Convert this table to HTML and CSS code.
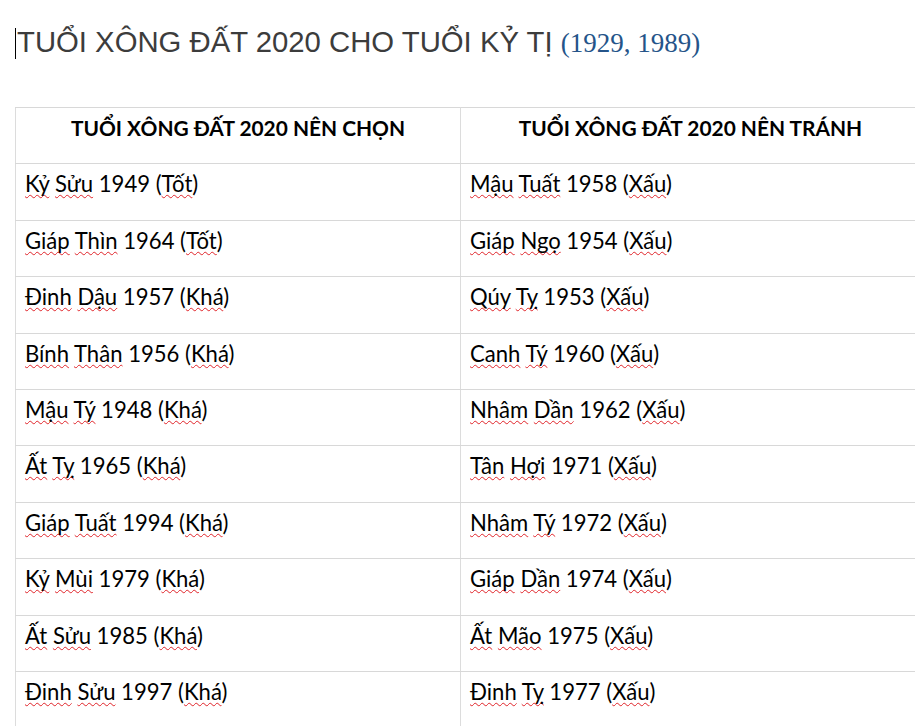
FILE: index.html
```html
<!DOCTYPE html>
<html lang="vi">
<head>
<meta charset="utf-8">
<title>Tuổi xông đất 2020 cho tuổi Kỷ Tị</title>
<link rel="stylesheet" href="styles.css">
</head>
<body>
<div class="page">
  <h1 class="title"><span class="caret"></span>TUỔI XÔNG ĐẤT 2020 CHO TUỔI KỶ TỊ <span class="years">(1929, 1989)</span></h1>
  <table class="grid">
    <colgroup><col class="c1"><col class="c2"></colgroup>
    <thead>
      <tr><th>TUỔI XÔNG ĐẤT 2020 NÊN CHỌN</th><th>TUỔI XÔNG ĐẤT 2020 NÊN TRÁNH</th></tr>
    </thead>
    <tbody>
      <tr><td><span class="sp">Kỷ</span> <span class="sp">Sửu</span> 1949 (<span class="sp">Tốt</span>)</td><td><span class="sp">Mậu</span> <span class="sp">Tuất</span> 1958 (<span class="sp">Xấu</span>)</td></tr>
      <tr><td><span class="sp">Giáp</span> <span class="sp">Thìn</span> 1964 (<span class="sp">Tốt</span>)</td><td><span class="sp">Giáp</span> <span class="sp">Ngọ</span> 1954 (<span class="sp">Xấu</span>)</td></tr>
      <tr><td><span class="sp">Đinh</span> <span class="sp">Dậu</span> 1957 (<span class="sp">Khá</span>)</td><td><span class="sp">Qúy</span> <span class="sp">Tỵ</span> 1953 (<span class="sp">Xấu</span>)</td></tr>
      <tr><td><span class="sp">Bính</span> <span class="sp">Thân</span> 1956 (<span class="sp">Khá</span>)</td><td><span class="sp">Canh</span> <span class="sp">Tý</span> 1960 (<span class="sp">Xấu</span>)</td></tr>
      <tr><td><span class="sp">Mậu</span> <span class="sp">Tý</span> 1948 (<span class="sp">Khá</span>)</td><td><span class="sp">Nhâm</span> <span class="sp">Dần</span> 1962 (<span class="sp">Xấu</span>)</td></tr>
      <tr><td><span class="sp">Ất</span> <span class="sp">Tỵ</span> 1965 (<span class="sp">Khá</span>)</td><td><span class="sp">Tân</span> <span class="sp">Hợi</span> 1971 (<span class="sp">Xấu</span>)</td></tr>
      <tr><td><span class="sp">Giáp</span> <span class="sp">Tuất</span> 1994 (<span class="sp">Khá</span>)</td><td><span class="sp">Nhâm</span> <span class="sp">Tý</span> 1972 (<span class="sp">Xấu</span>)</td></tr>
      <tr><td><span class="sp">Kỷ</span> <span class="sp">Mùi</span> 1979 (<span class="sp">Khá</span>)</td><td><span class="sp">Giáp</span> <span class="sp">Dần</span> 1974 (<span class="sp">Xấu</span>)</td></tr>
      <tr><td><span class="sp">Ất</span> <span class="sp">Sửu</span> 1985 (<span class="sp">Khá</span>)</td><td><span class="sp">Ất</span> <span class="sp">Mão</span> 1975 (<span class="sp">Xấu</span>)</td></tr>
      <tr><td><span class="sp">Đinh</span> <span class="sp">Sửu</span> 1997 (<span class="sp">Khá</span>)</td><td><span class="sp">Đinh</span> <span class="sp">Tỵ</span> 1977 (<span class="sp">Xấu</span>)</td></tr>
    </tbody>
  </table>
</div>
</body>
</html>
```

FILE: styles.css
```css
html, body {
  margin: 0;
  padding: 0;
  background: #ffffff;
  overflow: hidden;
}

.page {
  width: 915px;
  height: 726px;
  overflow: hidden;
  padding: 0 0 0 15px;
  box-sizing: border-box;
}

.title {
  margin: 0;
  padding-top: 25px;
  height: 107px;
  box-sizing: border-box;
  font-family: "Liberation Sans", Arial, sans-serif;
  font-weight: normal;
  font-size: 29.3px;
  line-height: 34px;
  color: #3c3c3c;
  white-space: nowrap;
}

.caret {
  display: inline-block;
  width: 1px;
  height: 31px;
  background: #000000;
  vertical-align: -7px;
  margin-right: 1px;
}

.years {
  font-family: "Liberation Serif", "Times New Roman", serif;
  font-size: 27px;
  color: #255489;
}

.grid {
  border-collapse: collapse;
  table-layout: fixed;
  width: 905px;
  font-family: Lato, "Open Sans", sans-serif;
  font-size: 22.1px;
  color: #000000;
}

.c1 { width: 445px; }
.c2 { width: 460px; }

.grid th,
.grid td {
  height: 56.4px;
  box-sizing: border-box;
  padding: 6px 9px 0 9px;
  vertical-align: top;
  line-height: 27px;
  border-top: 1px solid #d8d8d8;
  border-bottom: 1px solid #d8d8d8;
  border-left: 1px solid #dcdcdc;
  border-right: 1px solid #dcdcdc;
  white-space: nowrap;
}

.grid th {
  font-weight: bold;
  font-size: 20.9px;
  text-align: center;
  padding-top: 6px;
}

.grid td {
  font-weight: normal;
  text-align: left;
}

.sp {
  text-decoration: underline wavy #e0242a;
  text-decoration-thickness: 1px;
  text-underline-offset: 2px;
  text-decoration-skip-ink: none;
}
```
